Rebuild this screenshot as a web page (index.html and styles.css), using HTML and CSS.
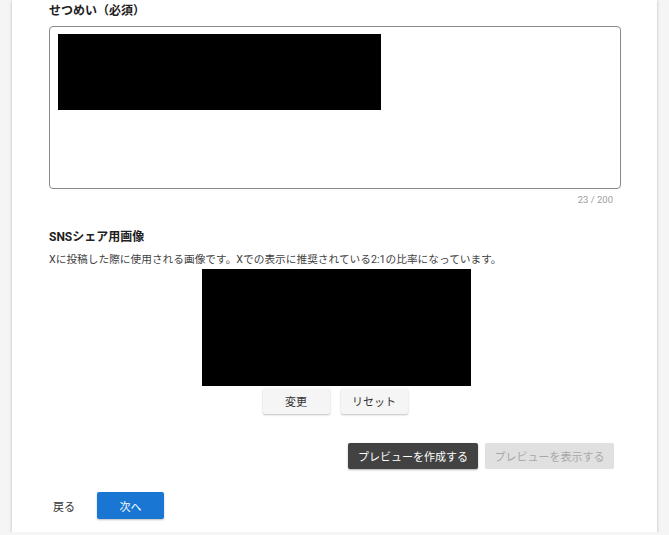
FILE: index.html
```html
<!DOCTYPE html>
<html lang="ja">
<head>
    <meta charset="UTF-8">
    <meta name="viewport" content="width=device-width, initial-scale=1.0">
    <title>投稿の作成</title>
    <link rel="stylesheet" href="styles.css">
</head>
<body>
    <div class="card">
        <h2 class="label">せつめい（必須）</h2>
        <div class="field">
            <div class="redact"></div>
        </div>
        <div class="counter">23 / 200</div>

        <h2 class="label sns-label">SNSシェア用画像</h2>
        <p class="desc">Xに投稿した際に使用される画像です。Xでの表示に推奨されている2:1の比率になっています。</p>
        <div class="share-image"></div>
        <div class="image-actions">
            <button class="btn btn-light">変更</button>
            <button class="btn btn-light">リセット</button>
        </div>

        <div class="preview-actions">
            <button class="btn btn-dark">プレビューを作成する</button>
            <button class="btn btn-disabled" disabled>プレビューを表示する</button>
        </div>

        <div class="nav-actions">
            <button class="btn btn-text">戻る</button>
            <button class="btn btn-primary">次へ</button>
        </div>
    </div>
</body>
</html>
```

FILE: styles.css
```css
body {
    font-family: Roboto, "Noto Sans CJK JP", sans-serif;
    background-color: #f5f5f5;
    margin: 0;
    padding: 0;
    color: #212121;
}
.card {
    background-color: #fff;
    margin: 0 12px;
    padding: 0 36px 13px 37px;
    box-shadow: 0 1px 3px rgba(0, 0, 0, 0.25);
}
.label {
    margin: 0;
    font-size: 12px;
    font-weight: bold;
    line-height: 20px;
    padding-top: 1px;
}
.field {
    margin-top: 5px;
    height: 163px;
    box-sizing: border-box;
    border: 1px solid #8a8a8a;
    border-radius: 4px;
    padding: 7px 8px;
}
.redact {
    width: 323px;
    height: 76px;
    background-color: #000;
}
.counter {
    text-align: right;
    font-size: 9.5px;
    line-height: 20px;
    margin-top: 1px;
    padding-right: 8px;
    color: #9e9e9e;
}
.sns-label {
    margin-top: 16px;
}
.desc {
    margin: 6px 0 0;
    font-size: 10.7px;
    line-height: 14px;
    color: #424242;
}
.share-image {
    width: 269px;
    height: 117px;
    margin: 2px auto 0;
    background-color: #000;
    position: relative;
    left: 1px;
}
.image-actions {
    display: flex;
    justify-content: center;
    gap: 11px;
    margin-top: 2px;
}
.btn {
    font-family: inherit;
    font-size: 11px;
    border: none;
    border-radius: 2px;
    height: 26px;
    padding: 0;
    white-space: nowrap;
    cursor: pointer;
}
.btn-light {
    width: 67px;
    background-color: #f5f5f5;
    color: #333;
    box-shadow: 0 1px 2px rgba(0, 0, 0, 0.25);
}
.preview-actions {
    display: flex;
    justify-content: flex-end;
    gap: 7px;
    margin-top: 29px;
    padding-right: 7px;
}
.btn-dark {
    width: 130px;
    background-color: #424242;
    color: #fff;
    box-shadow: 0 1px 2px rgba(0, 0, 0, 0.3);
}
.btn-disabled {
    width: 129px;
    background-color: #e0e0e0;
    color: #a8a8a8;
}
.nav-actions {
    display: flex;
    align-items: center;
    margin-top: 23px;
}
.btn-text {
    width: 30px;
    background: none;
    color: #333;
}
.btn-primary {
    margin-left: 18px;
    width: 67px;
    height: 27px;
    background-color: #1976d2;
    color: #fff;
    box-shadow: 0 1px 2px rgba(0, 0, 0, 0.25);
}
```
